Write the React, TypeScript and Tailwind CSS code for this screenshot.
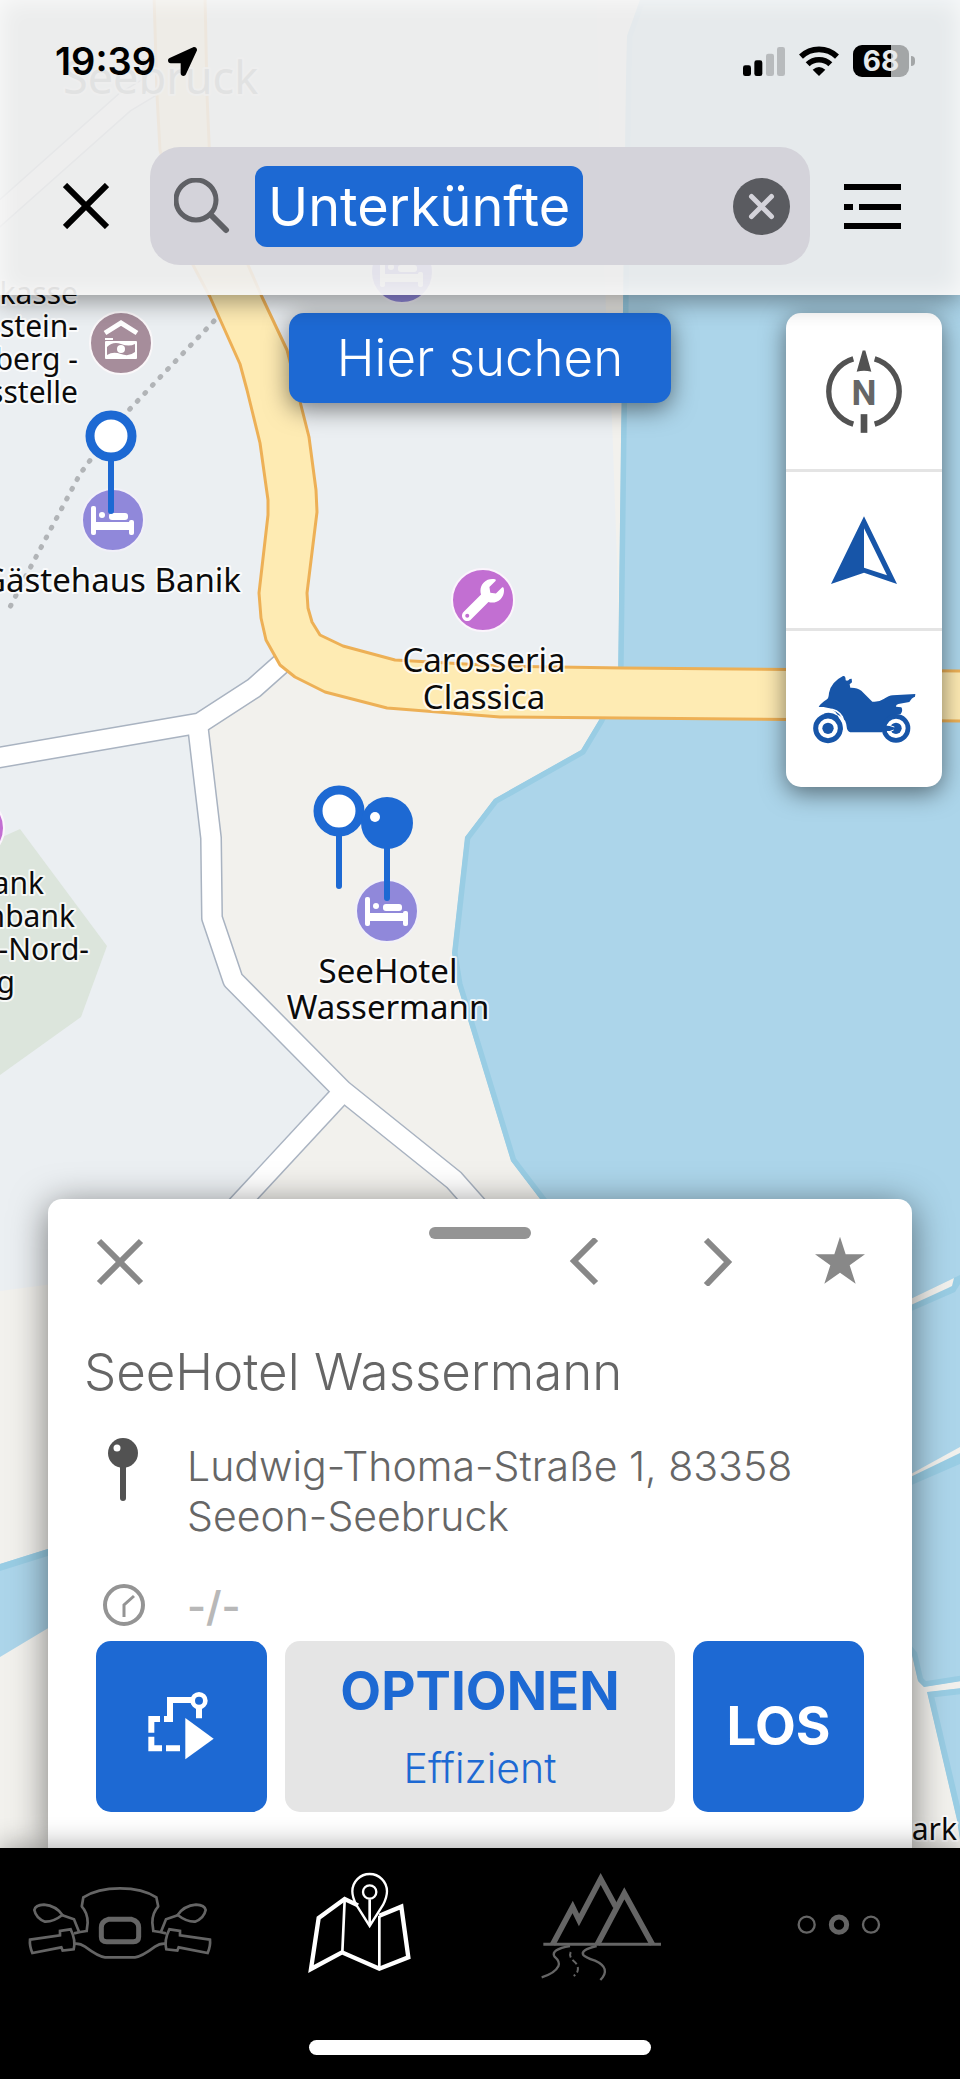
import React, { useState } from "react";
import { FaLocationArrow, FaWrench } from "react-icons/fa";

interface PoiProps {
  x: number;
  y: number;
}

const BedPoi: React.FC<PoiProps> = ({ x, y }) => (
  <g transform={`translate(${x} ${y})`}>
    <circle r="31" fill="#9088da" stroke="#f1f0f8" strokeWidth="2" />
    <g fill="#ffffff">
      <rect x="-22" y="-14" width="5" height="29" rx="2" />
      <circle cx="-11" cy="-5" r="3" />
      <rect x="-4" y="-7" width="19" height="7" rx="3" />
      <rect x="-20" y="2" width="40" height="8" />
      <rect x="16" y="0" width="5" height="15" rx="2" />
    </g>
  </g>
);

const WrenchPoi: React.FC<PoiProps> = ({ x, y }) => (
  <g transform={`translate(${x} ${y})`}>
    <circle r="31" fill="#c26fd2" stroke="#fbf4fc" strokeWidth="2" />
    <FaWrench x="-21" y="-21" size={42} color="#ffffff" />
  </g>
);

const BankPoi: React.FC<PoiProps> = ({ x, y }) => (
  <g transform={`translate(${x} ${y})`}>
    <circle r="31" fill="#a68d9b" stroke="#faf7f9" strokeWidth="2" />
    <path d="M-16 -10L0 -20L16 -10" fill="none" stroke="#ffffff" strokeWidth="5" />
    <path d="M-16 -4H-8" stroke="#ffffff" strokeWidth="2" />
    <rect x="-16" y="-2" width="32" height="18" rx="1" fill="#ffffff" />
    <path d="M-14 4Q-8 -2 0 1Q8 4 14 1V9Q8 14 0 11Q-8 8 -14 12Z" fill="#a68d9b" />
    <circle cy="6" r="4" fill="#ffffff" />
  </g>
);

const HollowPin: React.FC<PoiProps> = ({ x, y }) => (
  <g transform={`translate(${x} ${y})`} stroke="#1d69d3">
    <path d="M0 22V75" strokeWidth="6" strokeLinecap="round" />
    <circle r="21" fill="#ffffff" strokeWidth="9" />
  </g>
);

const FilledPin: React.FC<PoiProps> = ({ x, y }) => (
  <g transform={`translate(${x} ${y})`}>
    <path d="M0 22V75" stroke="#1d69d3" strokeWidth="6" strokeLinecap="round" />
    <circle r="26" fill="#1d69d3" />
    <circle cx="-12" cy="-6" r="5" fill="#ffffff" />
  </g>
);

const LAKE =
  "M640 0L627 36L626 80L623 310L621 440L618 680L599 720L581 750L494 799L465 837L452 953L457 984L511 1161L540 1199L700 1400L912 1655L918 1681L924 1687L980 1678V0Z";
const POND = "M927 1692L980 1686V1880L960 1840L957 1820Z";
const LANE_WEST = "M290 656L254 688L200 723L-10 759";
const LANE_SOUTH = "M198 728L211 838L212 918L233 980L342 1090L454 1180L500 1232";
const LANE_FORK = "M340 1095L227 1217";
const LANE_NORTH = "M-10 222L125 102L185 66";

const MapCanvas: React.FC = () => (
  <svg
    viewBox="0 0 960 2079"
    preserveAspectRatio="xMidYMin slice"
    className="absolute inset-0 h-full w-full bg-[#f2f1ed]"
    aria-hidden="true"
  >
    <defs>
      <clipPath id="lake">
        <path d={LAKE} />
      </clipPath>
      <clipPath id="pond">
        <path d={POND} />
      </clipPath>
    </defs>

    {/* Land use */}
    <path
      d="M0 0H597L600 150L606 310L612 420L617 560L619 670L400 690L290 670L200 735L212 835L214 920L236 980L340 1090L250 1190L120 1275L0 1291Z"
      fill="#ebeff2"
    />
    <path d="M0 838L20 829L107 946L81 1017L0 1075Z" fill="#dce5dc" />

    {/* Water */}
    <path d={LAKE} fill="#acd5ea" stroke="#99cde4" strokeWidth="11" clipPath="url(#lake)" />
    <path d={POND} fill="#acd5ea" stroke="#99cde4" strokeWidth="12" clipPath="url(#pond)" />
    <path d="M0 1564L70 1542V1615L0 1657Z" fill="#acd5ea" />
    <path d="M0 1564L70 1542V1549L0 1571Z" fill="#99cde4" />
    <path d="M900 1304L960 1275V1284L955 1292L900 1316Z" fill="#99cde4" />
    <path d="M900 1304L954 1278L952 1286L948 1288L900 1310Z" fill="#f2f1ed" />
    <path d="M900 1482L960 1448V1464L900 1490Z" fill="#99cde4" />
    <path d="M900 1480L960 1447V1453L900 1482Z" fill="#f2f1ed" />

    {/* Side roads */}
    <g fill="none" strokeLinejoin="round">
      <g stroke="#a9b3c1" strokeWidth="22">
        <path d={LANE_WEST} />
        <path d={LANE_SOUTH} />
        <path d={LANE_FORK} />
        <path d={LANE_NORTH} />
      </g>
      <g stroke="#ffffff" strokeWidth="19">
        <path d={LANE_WEST} />
        <path d={LANE_SOUTH} />
        <path d={LANE_FORK} />
        <path d={LANE_NORTH} />
      </g>
    </g>

    {/* Main road */}
    <path
      d="M154 -5L157 95L160 150L193 265L210 297L240 364L247 390L260 443L268 500V515L259 593L261 618L266 640L280 665L295 677L325 692L387 708L400 709L500 717L623 718L970 721V671L623 668L500 666L395 660L343 646L320 635L312 622L308 608L307 593L317 512L316 490L309 437L287 350L262 297L248 265L210 165L207 95L205 -5Z"
      fill="#feebb3"
      stroke="#edb056"
      strokeWidth="3"
      strokeLinejoin="round"
    />

    {/* Footpath */}
    <path
      d="M214 321L167 370L128 411L94 455L80 474L28 572L9 609"
      fill="none"
      stroke="#b1b4b7"
      strokeWidth="5"
      strokeLinecap="round"
      strokeDasharray="1 10"
    />

    <BankPoi x={121} y={343} />
    <BedPoi x={113} y={520} />
    <BedPoi x={387} y={911} />
    <BedPoi x={402} y={272} />
    <WrenchPoi x={483} y={600} />
    <WrenchPoi x={-27} y={828} />

    <g
      fontFamily='"Noto Sans", sans-serif'
      fontSize="33"
      fill="#0b0b0b"
      stroke="#ffffff"
      strokeOpacity="0.8"
      strokeWidth="4"
      strokeLinejoin="round"
      paintOrder="stroke"
    >
      <text x="63" y="94" fontSize="45" fill="#7c8080">
        Seebruck
      </text>
      <g fontSize="30" textAnchor="end">
        <text x="78" y="304">kasse</text>
        <text x="78" y="337">stein-</text>
        <text x="78" y="370">berg -</text>
        <text x="78" y="403">sstelle</text>
        <text x="44" y="894">ank</text>
        <text x="75" y="927">nbank</text>
        <text x="89" y="960">-Nord-</text>
        <text x="15" y="993">g</text>
        <text x="957" y="1840">ark</text>
      </g>
      <text x="241" y="592" textAnchor="end">
        Gästehaus Banik
      </text>
      <g textAnchor="middle">
        <text x="484" y="672">Carosseria</text>
        <text x="484" y="709">Classica</text>
        <text x="388" y="983">SeeHotel</text>
        <text x="388" y="1019">Wassermann</text>
      </g>
    </g>

    <HollowPin x={111} y={436} />
    <HollowPin x={339} y={811} />
    <FilledPin x={387} y={823} />
  </svg>
);

const StatusBar: React.FC = () => (
  <div className="flex h-[60px] items-center justify-between pl-[55px] pr-[45px]">
    <div className="flex items-center gap-3 text-black">
      <span className="text-[38px] font-semibold leading-[48px]">19:39</span>
      <FaLocationArrow size={29} />
    </div>
    <div className="flex items-center gap-[14px]">
      <svg viewBox="792 138 126 87" className="h-[29px] w-[42px]">
        <rect x="792" y="193" width="24" height="32" rx="7" />
        <rect x="826" y="178" width="24" height="47" rx="7" />
        <rect x="861" y="158" width="24" height="67" rx="7" fill="#b8bbbd" />
        <rect x="894" y="138" width="24" height="87" rx="7" fill="#b8bbbd" />
      </svg>
      <svg viewBox="960 135 120 90" className="h-[30px] w-10">
        <g fill="none" stroke="#000000" strokeWidth="17">
          <path d="M966 167A78 78 0 0 1 1074 167" />
          <path d="M986 190A49 49 0 0 1 1054 190" />
        </g>
        <path d="M1001 206Q1020 190 1039 206L1020 225Z" />
      </svg>
      <div className="flex items-center gap-[2px]">
        <span className="flex h-8 w-14 items-center justify-center rounded-[9px] bg-[linear-gradient(90deg,#000_68%,#a3a6a7_68%)] text-[28px] font-bold leading-8 text-[#e6eaec]">
          68
        </span>
        <span className="h-[10px] w-[4px] rounded-r-full bg-[#a3a6a7]" />
      </div>
    </div>
  </div>
);

const NAV_ITEMS = [
  {
    label: "Cockpit",
    active: false,
    icon: (
      <svg viewBox="60 72 600 360" className="h-[120px] w-[200px]" fill="none" stroke="currentColor" strokeWidth="8">
        <path d="M245 201L250 172Q292 145 360 145Q428 145 469 172L475 201" />
        <path d="M222 311Q240 309 255 320Q295 350 315 352H405Q425 350 465 320Q480 309 498 311" />
        <path d="M325 238H395Q416 244 416 262V290Q416 305 400 305H320Q304 305 304 290V262Q304 244 325 238Z" strokeWidth="15" />
        {["", "translate(720 0) scale(-1 1)"].map((side) => (
          <g key={side} transform={side}>
            <path d="M245 199Q263 218 263 248L260 273Q240 276 222 280" />
            <path d="M103 210Q106 195 132 194Q168 197 187 225Q160 246 135 245Q108 235 103 210Z" />
            <path d="M187 226L222 238L237 275" />
            <path d="M90 299L180 286V273L212 268Q228 300 221 328L188 332L184 322L97 339Q88 318 90 299Z" />
          </g>
        ))}
      </svg>
    ),
  },
  {
    label: "Karte",
    active: true,
    icon: (
      <svg viewBox="780 72 600 360" className="h-[120px] w-[200px]" fill="none" stroke="currentColor" strokeWidth="13">
        <path d="M1074 196L1034 177L956 234L933 387L1026 337L1138 386L1225 352L1204 200L1138 227" />
        <path d="M1034 180L1027 337M1138 227V386" strokeWidth="8" />
        <path d="M1109 258L1069 195Q1057 172 1057 154A52 52 0 0 1 1161 154Q1161 172 1149 195Z" strokeWidth="7" />
        <circle cx="1109" cy="156" r="20" strokeWidth="7" />
        <path d="M1109 178V255" strokeWidth="8" />
      </svg>
    ),
  },
  {
    label: "Touren",
    active: false,
    icon: (
      <svg viewBox="60 72 600 360" className="h-[120px] w-[200px]" fill="none" stroke="currentColor">
        <g strokeWidth="17">
          <path d="M218 313L278 201L297 240L362 117L407 200" />
          <path d="M352 313L433 160L517 313" />
        </g>
        <path d="M190 313H543" strokeWidth="9" />
        <g strokeWidth="7">
          <path d="M270 318Q212 328 223 349Q242 366 235 379Q225 400 185 412" />
          <path d="M350 318Q300 330 310 345Q315 352 345 362Q395 385 361 420" />
          <path d="M272 336Q266 350 281 363Q297 376 293 392Q291 402 281 408" strokeWidth="6" strokeDasharray="17 9" />
        </g>
      </svg>
    ),
  },
  {
    label: "Mehr",
    active: false,
    icon: (
      <svg viewBox="780 72 600 360" className="h-[120px] w-[200px]" fill="none" stroke="currentColor" strokeWidth="7">
        <circle cx="980" cy="254" r="24" />
        <circle cx="1077" cy="254" r="23" strokeWidth="15" />
        <circle cx="1173" cy="254" r="24" />
      </svg>
    ),
  },
];

const App: React.FC = () => {
  const [query, setQuery] = useState("Unterkünfte");

  return (
    <div className="relative flex min-h-screen flex-col overflow-hidden font-[Inter,sans-serif]">
      <MapCanvas />

      {/* Search header */}
      <header className="relative z-10 bg-[#ececec]/90 pb-[30px] pt-[31px] shadow-[inset_0_0_24px_rgba(255,255,255,0.8),0_6px_24px_rgba(0,0,0,0.4)]">
        <StatusBar />
        <div className="mt-14 flex items-center pl-[63px] pr-[59px]">
          <button type="button" aria-label="Schließen">
            <svg viewBox="0 0 46 46" className="size-[46px]" stroke="#000000" strokeWidth="6">
              <path d="M2 2L44 44M44 2L2 44" />
            </svg>
          </button>
          <div className="ml-[41px] mr-[34px] flex h-[118px] flex-1 items-center rounded-[30px] bg-[#d4d3da] pl-6 pr-5">
            <svg viewBox="0 0 56 56" className="size-14 shrink-0" fill="none" stroke="#5f6065" strokeWidth="5">
              <circle cx="22" cy="22" r="20" />
              <path d="M37 37L52 52" strokeWidth="6" strokeLinecap="round" />
            </svg>
            <div className="flex min-w-0 flex-1 pl-[25px]">
              <input
                type="text"
                aria-label="Suche"
                value={query}
                onChange={(e) => setQuery(e.target.value)}
                className="field-sizing-content h-[81px] max-w-full rounded-xl bg-[#1d69d3] px-[13px] text-[54px] text-white outline-none"
              />
            </div>
            <button type="button" aria-label="Eingabe löschen" onClick={() => setQuery("")}>
              <svg viewBox="0 0 57 57" className="size-[57px]">
                <circle cx="28.5" cy="28.5" r="28.5" fill="#5a5b60" />
                <path d="M18.5 18.5L38.5 38.5M38.5 18.5L18.5 38.5" stroke="#d4d3da" strokeWidth="5" strokeLinecap="round" />
              </svg>
            </button>
          </div>
          <button type="button" aria-label="Ergebnisliste">
            <svg viewBox="0 0 57 45" className="h-[45px] w-[57px]">
              <path d="M0 0H57V6H0ZM0 20H9V26H0ZM15 20H57V26H15ZM0 39H57V45H0Z" />
            </svg>
          </button>
        </div>
      </header>

      <main className="relative flex flex-1 flex-col justify-between">
        {/* Map controls */}
        <div className="grid grid-cols-[1fr_auto_1fr] items-start p-[18px]">
          <button
            type="button"
            className="col-start-2 h-[90px] rounded-[15px] bg-[#1d69d3] px-12 text-[51px] font-light leading-[90px] text-white shadow-[0_6px_24px_rgba(0,0,0,0.5)]"
          >
            Hier suchen
          </button>
          <div className="flex w-[156px] flex-col divide-y-3 divide-[#e4e4e4] justify-self-end overflow-hidden rounded-[15px] bg-white shadow-[0_6px_24px_rgba(0,0,0,0.5)]">
            <button type="button" aria-label="Norden" className="flex h-[159px] items-center justify-center">
              <svg viewBox="1032 187 240 290" className="h-[97px] w-20" fill="#525252">
                <path d="M1148 209H1156L1174 273Q1152 267 1130 273Z" />
                <rect x="1142" y="400" width="20" height="56" />
                <path
                  d="M1184 234A102 102 0 0 1 1184 430M1120 234A102 102 0 0 0 1120 430"
                  fill="none"
                  stroke="#525252"
                  strokeWidth="16"
                />
                <text x="1152" y="372" textAnchor="middle" fontFamily="Roboto, sans-serif" fontSize="106" fontWeight="700" fill="#666666">
                  N
                </text>
              </svg>
            </button>
            <button type="button" aria-label="Meine Position" className="flex h-[159px] items-center justify-center">
              <svg viewBox="1032 690 240 240" className="size-20" fill="#1755a8">
                <path fillRule="evenodd" d="M1152 709L1251 912L1152 878L1053 912ZM1152 745V863L1221 886Z" />
              </svg>
            </button>
            <button type="button" aria-label="Motorrad" className="flex h-[156px] items-center justify-center">
              <svg viewBox="992 1127 321 321" className="size-[107px]" fill="#1755a8">
                <path d="M1015 1280Q1021 1269 1040 1257Q1045 1254 1046 1238Q1052 1205 1088 1187Q1096 1185 1096 1200Q1103 1203 1108 1196L1114 1195L1115 1206L1108 1212L1110 1222Q1130 1221 1143 1231L1176 1264Q1196 1266 1210 1256Q1226 1246 1237 1245L1305 1241L1304 1249Q1294 1252 1287 1265L1254 1271Q1246 1273 1247 1279L1263 1281Q1269 1290 1261 1301L1235 1306Q1208 1316 1205 1356H1115Q1103 1356 1100 1345Q1098 1315 1078 1306L1070 1302Q1060 1284 1030 1280Z" />
                <circle cx="1247" cy="1344" r="36" fill="#ffffff" stroke="#1755a8" strokeWidth="14" />
                <circle cx="1247" cy="1344" r="17" />
                <path d="M1215 1336H1240V1352H1215Z" />
                <path d="M1220 1333L1242 1340M1222 1356L1240 1349" stroke="#ffffff" strokeWidth="3" />
                <path d="M1040 1286Q1072 1285 1086 1310Q1093 1330 1091 1345" fill="none" stroke="#ffffff" strokeWidth="5" />
                <path d="M1030 1300Q1050 1292 1072 1306L1084 1330L1088 1350" />
                <circle cx="1043" cy="1344" r="37" fill="#ffffff" stroke="#1755a8" strokeWidth="15" />
                <circle cx="1043" cy="1344" r="17" />
              </svg>
            </button>
          </div>
        </div>

        {/* Place card */}
        <section className="relative mx-12 rounded-t-[14px] bg-white px-12 pb-9 pt-[39px] text-[#666666] shadow-[0_6px_36px_rgba(0,0,0,0.5)]">
          <span className="absolute left-1/2 top-7 h-3 w-[102px] -translate-x-1/2 rounded-full bg-[#949494]" />
          <div className="flex items-center justify-between text-[#888888]">
            <button type="button" aria-label="Karte schließen">
              <svg viewBox="0 0 48 48" className="size-12" stroke="currentColor" strokeWidth="6">
                <path d="M3 3L45 45M45 3L3 45" />
              </svg>
            </button>
            <div className="flex gap-20">
              <button type="button" aria-label="Vorheriges Ergebnis">
                <svg viewBox="0 0 48 48" className="size-12" fill="none" stroke="currentColor" strokeWidth="6">
                  <path d="M36 1L14 23L36 45" />
                </svg>
              </button>
              <button type="button" aria-label="Nächstes Ergebnis">
                <svg viewBox="0 0 48 48" className="size-12" fill="none" stroke="currentColor" strokeWidth="6">
                  <path d="M18 2L40 24L18 47" />
                </svg>
              </button>
              <button type="button" aria-label="Favorit">
                <svg viewBox="1008 171 144 144" className="size-12 overflow-visible" fill="currentColor">
                  <path d="M1080 167L1097 220H1155L1109 253L1127 308L1080 275L1033 308L1051 253L1005 220H1063Z" />
                </svg>
              </button>
            </div>
          </div>

          <h1 className="-ml-3 mt-[54px] text-[51px] font-light leading-[64px]">SeeHotel Wassermann</h1>

          <div className="mt-[37px] grid grid-cols-[91px_1fr] gap-y-10 leading-[50px]">
            <svg viewBox="0 3 54 64" className="h-16 w-[54px] overflow-visible" fill="#525252">
              <path d="M27 26V60" stroke="#525252" strokeWidth="6" strokeLinecap="round" />
              <circle cx="27" cy="15" r="15" />
              <circle cx="21" cy="10" r="3.5" fill="#ffffff" />
            </svg>
            <p className="text-[41px] font-light">
              Ludwig-Thoma-Straße 1, 83358
              <br />
              Seeon-Seebruck
            </p>
            <svg viewBox="0 0 56 50" className="h-[50px] w-14" fill="none" stroke="#949494">
              <circle cx="28" cy="24" r="19" strokeWidth="4" />
              <path d="M28 36V24L38 15" strokeWidth="3" />
            </svg>
            <p className="text-[41px] font-semibold text-[#b8b8b8]">-/-</p>
          </div>

          <div className="mt-[10px] flex gap-[18px]">
            <button
              type="button"
              aria-label="Zur Route hinzufügen"
              className="flex size-[171px] shrink-0 items-center justify-center rounded-[15px] bg-[#1d69d3]"
            >
              <svg viewBox="192 207 225 225" className="size-[75px]" fill="none" stroke="#ffffff" strokeWidth="18">
                <path d="M214 338V297H240M252 297H270V240H336" />
                <path d="M357 264V295M214 350V385H246M258 385H300" />
                <circle cx="357" cy="242" r="19" strokeWidth="14" />
                <path d="M316 294L401 356L316 418Z" fill="#ffffff" stroke="none" />
              </svg>
            </button>
            <button
              type="button"
              className="flex h-[171px] flex-1 flex-col items-center rounded-[15px] bg-[#e5e5e5] pt-[18px] text-[#1d69d3]"
            >
              <span className="text-[53px] font-bold leading-[64px]">OPTIONEN</span>
              <span className="mt-5 text-[41px] font-light leading-[50px] [font-variant-ligatures:none]">Effizient</span>
            </button>
            <button
              type="button"
              className="size-[171px] shrink-0 rounded-[15px] bg-[#1d69d3] text-[53px] font-bold text-white"
            >
              LOS
            </button>
          </div>
        </section>
      </main>

      {/* Tab bar */}
      <footer className="relative bg-black pb-6 pt-4 shadow-[0_-4px_24px_rgba(0,0,0,0.3)]">
        <nav className="grid grid-cols-4">
          {NAV_ITEMS.map((item) => (
            <a
              key={item.label}
              href="#"
              aria-label={item.label}
              className={`flex justify-center ${item.active ? "text-white" : "text-[#656565]"}`}
            >
              {item.icon}
            </a>
          ))}
        </nav>
        <div className="mx-auto mt-14 h-[15px] w-[342px] rounded-full bg-white" />
      </footer>
    </div>
  );
};

export default App;
